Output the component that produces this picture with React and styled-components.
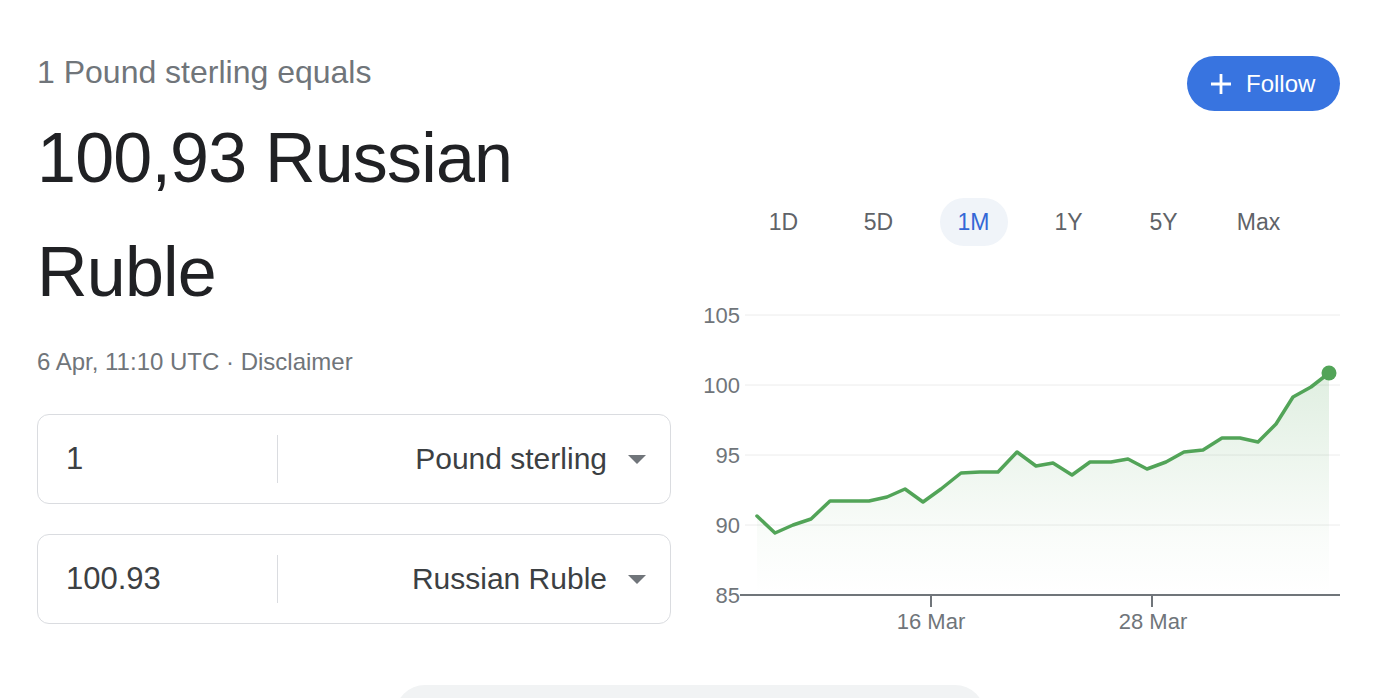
import React from 'react';
import styled, { createGlobalStyle } from 'styled-components';

const Global = createGlobalStyle`
  html, body {
    margin: 0;
    padding: 0;
    background: #fff;
    overflow: hidden;
    font-family: 'Liberation Sans', Arial, sans-serif;
  }
`;

const Page = styled.div`
  width: 1396px;
  box-sizing: border-box;
  padding: 0 56px 0 37px;
`;
const MainRow = styled.div`
  display: flex;
  gap: 29px;
`;
const LeftCol = styled.div`
  width: 634px;
  display: flex;
  flex-direction: column;
  padding-top: 52px;
`;
const RightCol = styled.div`
  width: 640px;
  display: flex;
  flex-direction: column;
`;
const Subtitle = styled.div`
  font-size: 32px;
  line-height: 40px;
  color: #70757a;
`;
const Title = styled.h1`
  margin: 9px 0 0;
  font-size: 70px;
  line-height: 114px;
  font-weight: 400;
  letter-spacing: -0.8px;
  color: #202124;
`;
const Meta = styled.div`
  margin-top: 18px;
  font-size: 24px;
  line-height: 30px;
  color: #70757a;
`;
const Boxes = styled.div`
  margin-top: 37px;
  display: flex;
  flex-direction: column;
  gap: 30px;
`;
const ConvBox = styled.div`
  height: 90px;
  box-sizing: border-box;
  border: 1px solid #dadce0;
  border-radius: 12px;
  display: flex;
  align-items: center;
`;
const ValueField = styled.div`
  width: 239px;
  box-sizing: border-box;
  padding-left: 28px;
  font-size: 31px;
  color: #3c4043;
`;
const Divider = styled.div`
  width: 1px;
  height: 48px;
  background: #dadce0;
`;
const CurrencyField = styled.div`
  flex: 1;
  display: flex;
  justify-content: flex-end;
  align-items: center;
  gap: 21px;
  padding-right: 24px;
  font-size: 30px;
  color: #3c4043;
`;
const Caret = styled.span`
  width: 0;
  height: 0;
  border-left: 9px solid transparent;
  border-right: 9px solid transparent;
  border-top: 9px solid #70757a;
`;
const FollowButton = styled.button`
  align-self: flex-end;
  margin-top: 56px;
  height: 55px;
  width: 153px;
  border: none;
  border-radius: 28px;
  background: #3874e0;
  color: #fff;
  font-family: inherit;
  font-size: 24px;
  display: flex;
  align-items: center;
  gap: 14px;
  padding: 0 0 0 23px;
  cursor: pointer;
`;
const Tabs = styled.div`
  margin-top: 87px;
  display: flex;
  justify-content: center;
  gap: 27px;
  padding-left: 2px;
`;
const Tab = styled.div`
  width: 68px;
  height: 48px;
  border-radius: 24px;
  display: flex;
  align-items: center;
  justify-content: center;
  font-size: 23px;
  color: ${p => (p.$active ? '#3367d6' : '#5f6368')};
  background: ${p => (p.$active ? '#f0f4f9' : 'transparent')};
`;
const Chart = styled.svg`
  margin-top: 54px;
  display: block;
  font-family: 'Liberation Sans', Arial, sans-serif;
`;
const BottomPill = styled.div`
  margin: 45px 0 0 358px;
  width: 590px;
  height: 60px;
  border-radius: 30px;
  background: #f1f3f4;
`;

const points = [
  [57, 216], [75, 233], [93, 225], [111, 219], [130, 201], [149, 201], [169, 201],
  [187, 197], [205, 189], [223, 202], [241, 189], [261, 173], [280, 172], [298, 172],
  [317, 152], [336, 166], [353, 163], [372, 175], [390, 162], [411, 162], [428, 159],
  [447, 169], [466, 162], [484, 152], [503, 150], [522, 138], [540, 138], [558, 142],
  [576, 124], [593, 97], [611, 87], [629, 73],
];

const yTicks = [
  { label: '105', y: 15 },
  { label: '100', y: 85 },
  { label: '95', y: 155 },
  { label: '90', y: 225 },
];

function PriceChart() {
  const line = points.map(p => p.join(',')).join(' ');
  const last = points[points.length - 1];
  const area = `${line} ${last[0]},294 ${points[0][0]},294`;
  return (
    <Chart width="640" height="340" viewBox="0 0 640 340">
      <defs>
        <linearGradient id="fillG" x1="0" y1="73" x2="0" y2="294" gradientUnits="userSpaceOnUse">
          <stop offset="0" stopColor="#52a458" stopOpacity="0.18" />
          <stop offset="0.75" stopColor="#52a458" stopOpacity="0.03" />
          <stop offset="1" stopColor="#52a458" stopOpacity="0" />
        </linearGradient>
      </defs>
      {yTicks.map(t => (
        <g key={t.label}>
          <line x1="45" x2="640" y1={t.y} y2={t.y} stroke="#ececec" strokeWidth="1" />
          <text x="40" y={t.y} textAnchor="end" dominantBaseline="central" fontSize="22" fill="#70757a">
            {t.label}
          </text>
        </g>
      ))}
      <polygon points={area} fill="url(#fillG)" />
      <polyline points={line} fill="none" stroke="#52a458" strokeWidth="3.5" strokeLinejoin="round" strokeLinecap="round" />
      <circle cx={last[0]} cy={last[1]} r="7.5" fill="#52a458" />
      <line x1="40" x2="640" y1="295" y2="295" stroke="#70757a" strokeWidth="2" />
      <text x="40" y="295" textAnchor="end" dominantBaseline="central" fontSize="22" fill="#70757a">85</text>
      <line x1="231" x2="231" y1="295" y2="307" stroke="#70757a" strokeWidth="2" />
      <line x1="452" x2="452" y1="295" y2="307" stroke="#70757a" strokeWidth="2" />
      <text x="231" y="321" textAnchor="middle" dominantBaseline="central" fontSize="22" fill="#70757a">16 Mar</text>
      <text x="453" y="321" textAnchor="middle" dominantBaseline="central" fontSize="22" fill="#70757a">28 Mar</text>
    </Chart>
  );
}

const ranges = ['1D', '5D', '1M', '1Y', '5Y', 'Max'];

export default function App() {
  return (
    <Page>
      <Global />
      <MainRow>
        <LeftCol>
          <Subtitle>1 Pound sterling equals</Subtitle>
          <Title>100,93 Russian Ruble</Title>
          <Meta>6 Apr, 11:10 UTC · Disclaimer</Meta>
          <Boxes>
            <ConvBox>
              <ValueField>1</ValueField>
              <Divider />
              <CurrencyField>
                Pound sterling
                <Caret />
              </CurrencyField>
            </ConvBox>
            <ConvBox>
              <ValueField>100.93</ValueField>
              <Divider />
              <CurrencyField>
                Russian Ruble
                <Caret />
              </CurrencyField>
            </ConvBox>
          </Boxes>
        </LeftCol>
        <RightCol>
          <FollowButton>
            <svg width="22" height="22" viewBox="0 0 22 22">
              <path d="M11 1v20M1 11h20" stroke="#fff" strokeWidth="2.8" />
            </svg>
            Follow
          </FollowButton>
          <Tabs>
            {ranges.map(r => (
              <Tab key={r} $active={r === '1M'}>{r}</Tab>
            ))}
          </Tabs>
          <PriceChart />
        </RightCol>
      </MainRow>
      <BottomPill />
    </Page>
  );
}
